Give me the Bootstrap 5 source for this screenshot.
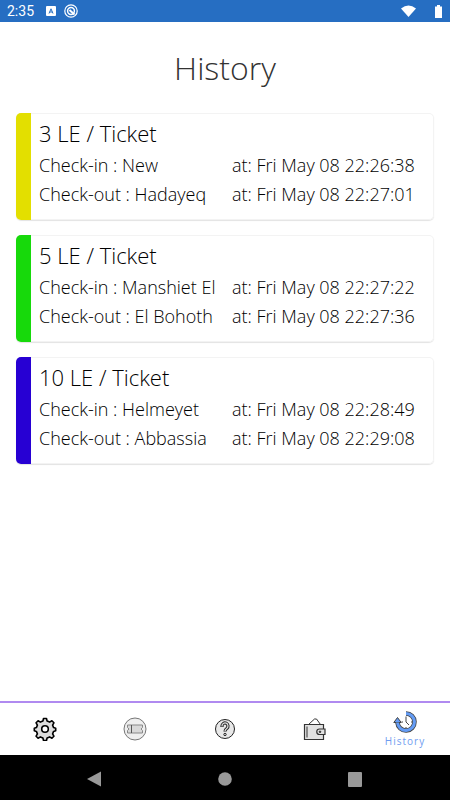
<!DOCTYPE html>
<html lang="en">
<head>
<meta charset="utf-8">
<meta name="viewport" content="width=device-width, initial-scale=1">
<title>History</title>
<link href="https://cdn.jsdelivr.net/npm/bootstrap@5.3.0/dist/css/bootstrap.min.css" rel="stylesheet">
<style>
body { font-family: "Open Sans", "Noto Sans", sans-serif; font-weight: 300; color: #000; }
.status-bar { height: 22px; background: #266ec2; color: #fff; font: 400 14px/22px Roboto, sans-serif; padding: 0 4px 0 7px; gap: 8px; }
.page-title { font-size: 32px; line-height: 44px; font-weight: 300; color: #333; margin: 24px 0 23px; }
.ticket-list { gap: 15px; }
.ticket { border-radius: 5px; min-height: 107px; box-shadow: inset 0 0 0 1px #f3f3f3, 0 1px 1px #e3e3e3; }
.stripe { width: 15px; }
.stripe-yellow { background: #e3df00; }
.stripe-green { background: #17d90b; }
.stripe-blue { background: #2700d3; }
.ticket-title { font-size: 22px; line-height: 32px; font-weight: 300; padding-bottom: 2px; }
.trip { font-size: 18px; line-height: 29px; }
.trip-time { width: 202px; }
.tabs { border-top: 2px solid #b08af0; height: 54px; background: #fff; }
.tab-label { font-weight: 400; font-size: 10px; line-height: 14px; letter-spacing: 1px; color: #6f9df0; }
.system-nav { height: 45px; background: #000; padding: 0 30px; }
</style>
</head>
<body class="d-flex flex-column min-vh-100 bg-white">
<header class="status-bar d-flex align-items-center">
  <span class="me-1">2:35</span>
  <svg width="10" height="10" viewBox="0 0 10 10" aria-hidden="true"><rect width="10" height="10" rx="1" fill="#fff"/><path d="M3 7.500 5 2.800l2 4.700M3.700 6h2.600" fill="none" stroke="#266ec2" stroke-width="1"/></svg>
  <svg width="14" height="14" viewBox="0 0 14 14" fill="none" stroke="#fff" aria-hidden="true"><circle cx="7" cy="7" r="6.200" stroke-width="1.200"/><circle cx="7" cy="7" r="3.400" stroke-width="1.500"/><path d="m5.500 6 5 4.500" stroke-width="2"/></svg>
  <svg class="ms-auto" width="15" height="12" viewBox="0 0 15 12" aria-hidden="true"><path d="M0 3.500Q7.500-2.500 15 3.500L7.500 12Z" fill="#fff"/></svg>
  <svg class="ms-2" width="14" height="13" viewBox="0 0 14 13" aria-hidden="true"><path d="M3 1.500h2V0h3v1.500h2V13H3V1.500Z" fill="#fff"/></svg>
</header>

<main class="flex-grow-1 px-3">
  <h1 class="page-title text-center">History</h1>
  <div class="d-flex flex-column ticket-list">
    <article class="ticket d-flex overflow-hidden">
      <div class="stripe stripe-yellow"></div>
      <div class="flex-grow-1 ps-2 pt-1">
        <h2 class="ticket-title mb-0">3 LE / Ticket</h2>
        <div class="trip d-flex justify-content-between text-nowrap"><span>Check-in : New</span><span class="trip-time">at: Fri May 08 22:26:38</span></div>
        <div class="trip d-flex justify-content-between text-nowrap"><span>Check-out : Hadayeq</span><span class="trip-time">at: Fri May 08 22:27:01</span></div>
      </div>
    </article>
    <article class="ticket d-flex overflow-hidden">
      <div class="stripe stripe-green"></div>
      <div class="flex-grow-1 ps-2 pt-1">
        <h2 class="ticket-title mb-0">5 LE / Ticket</h2>
        <div class="trip d-flex justify-content-between text-nowrap"><span>Check-in : Manshiet El</span><span class="trip-time">at: Fri May 08 22:27:22</span></div>
        <div class="trip d-flex justify-content-between text-nowrap"><span>Check-out : El Bohoth</span><span class="trip-time">at: Fri May 08 22:27:36</span></div>
      </div>
    </article>
    <article class="ticket d-flex overflow-hidden">
      <div class="stripe stripe-blue"></div>
      <div class="flex-grow-1 ps-2 pt-1">
        <h2 class="ticket-title mb-0">10 LE / Ticket</h2>
        <div class="trip d-flex justify-content-between text-nowrap"><span>Check-in : Helmeyet</span><span class="trip-time">at: Fri May 08 22:28:49</span></div>
        <div class="trip d-flex justify-content-between text-nowrap"><span>Check-out : Abbassia</span><span class="trip-time">at: Fri May 08 22:29:08</span></div>
      </div>
    </article>
  </div>
</main>

<nav class="tabs row row-cols-5 g-0" aria-label="Main">
  <a href="#settings" class="col d-flex align-items-center justify-content-center" aria-label="Settings">
    <svg width="24" height="24" viewBox="0 0 24 24" fill="#ddd" stroke="#000" stroke-width="1.600" stroke-linejoin="round"><path d="M10.500 1.500h3l.6 2.600 2.500 1 2.300-1.300 2 2-1.300 2.300 1 2.500 2.100.6v2.600l-2.100.6-1 2.500 1.300 2.300-2 2-2.300-1.300-2.500 1-.6 2.600h-3l-.6-2.600-2.500-1-2.300 1.300-2-2 1.300-2.300-1-2.500-2.100-.6v-2.600l2.100-.6 1-2.500-1.300-2.300 2-2 2.300 1.300 2.500-1Z"/><circle cx="12" cy="12" r="3.300" fill="#fff"/></svg>
  </a>
  <a href="#tickets" class="col d-flex align-items-center justify-content-center" aria-label="Tickets">
    <svg width="24" height="24" viewBox="0 0 24 24" fill="#eee" stroke="#777"><circle cx="12" cy="12" r="11"/><path d="M4.500 8h15v2.500L18 12l1.500 1.500V16h-15v-2.500L6 12l-1.500-1.500Z" fill="#d8d8d8" stroke="#888"/><path d="M8.500 8v8" stroke="#555"/></svg>
  </a>
  <a href="#help" class="col d-flex align-items-center justify-content-center" aria-label="Help">
    <svg width="22" height="22" viewBox="0 0 22 22" fill="none" stroke="#222"><circle cx="11" cy="11" r="9.500" fill="#e8e8e8"/><path d="M8 9V8a3 3 0 1 1 5 2.200c-1.400 1-2 1.500-2 3.300" stroke-width="3.200"/><path d="M8 8.500V8a3 3 0 1 1 5 2.200c-1.400 1-2 1.500-2 2.800" stroke="#ddd" stroke-width="1.300"/><circle cx="11" cy="16.500" r="1.200" fill="#ddd"/></svg>
  </a>
  <a href="#wallet" class="col d-flex align-items-center justify-content-center" aria-label="Wallet">
    <svg width="24" height="24" viewBox="0 0 24 24" fill="#e2e2e2" stroke="#333"><path d="m5.500 7.500 6-5.500h2l4 5.500" fill="#fff"/><path d="M1.500 7.500h19v15h-19Z" stroke-width="1.200"/><path d="M4 9.500v11"/><path d="M22 12v5.500h-5.500a2.700 2.700 0 0 1 0-5.500Z" stroke-width="1.200"/><circle cx="17" cy="14.800" r=".8" fill="#333"/></svg>
  </a>
  <a href="#history" class="col d-flex flex-column align-items-center justify-content-center text-decoration-none" aria-current="page">
    <svg width="24" height="24" viewBox="0 0 24 24" fill="none"><path d="M13 3.500a8.500 8.500 0 1 1-8.500 9" stroke="#444" stroke-width="4.600"/><path d="M.8 12.500 4.500 7.500 8.200 12.500Z" fill="#649cf5" stroke="#444"/><path d="M13 3.500a8.500 8.500 0 1 1-8.500 9" stroke="#649cf5" stroke-width="3"/><path d="M13 6.500v5.500l3 3M13 17v1M18 12h1M8.500 12H10" stroke="#444"/></svg>
    <span class="tab-label">History</span>
  </a>
</nav>

<footer class="system-nav row row-cols-3 g-0 align-items-center text-center">
  <button class="btn border-0 p-0 col" aria-label="Back"><svg width="15" height="16" viewBox="0 0 15 16"><path d="M0 8 14 .5v15Z" fill="#999"/></svg></button>
  <button class="btn border-0 p-0 col" aria-label="Home"><svg width="14" height="14" viewBox="0 0 14 14"><circle cx="7" cy="7" r="6.800" fill="#999"/></svg></button>
  <button class="btn border-0 p-0 col" aria-label="Recent apps"><svg width="14" height="15" viewBox="0 0 14 15"><rect width="14" height="15" rx="1" fill="#999"/></svg></button>
</footer>
<script src="https://cdn.jsdelivr.net/npm/bootstrap@5.3.0/dist/js/bootstrap.bundle.min.js"></script>
</body>
</html>
